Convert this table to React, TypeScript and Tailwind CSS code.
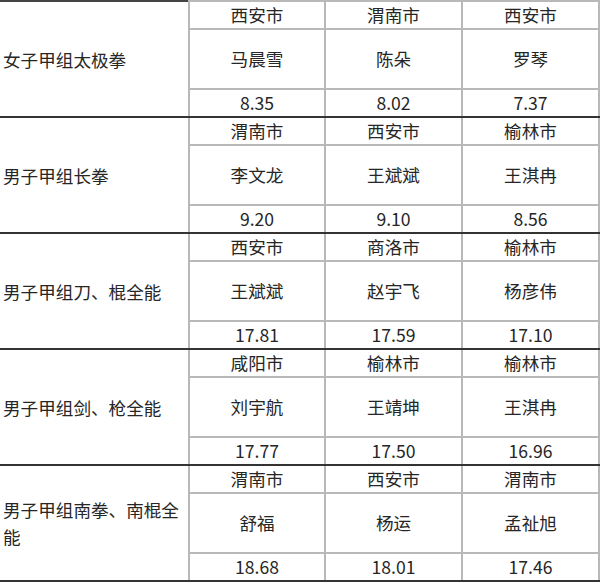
import { Fragment } from "react";

const GROUPS = [
  {
    event: "女子甲组太极拳",
    cities: ["西安市", "渭南市", "西安市"],
    names: ["马晨雪", "陈朵", "罗琴"],
    scores: ["8.35", "8.02", "7.37"],
  },
  {
    event: "男子甲组长拳",
    cities: ["渭南市", "西安市", "榆林市"],
    names: ["李文龙", "王斌斌", "王淇冉"],
    scores: ["9.20", "9.10", "8.56"],
  },
  {
    event: "男子甲组刀、棍全能",
    cities: ["西安市", "商洛市", "榆林市"],
    names: ["王斌斌", "赵宇飞", "杨彦伟"],
    scores: ["17.81", "17.59", "17.10"],
  },
  {
    event: "男子甲组剑、枪全能",
    cities: ["咸阳市", "榆林市", "榆林市"],
    names: ["刘宇航", "王靖坤", "王淇冉"],
    scores: ["17.77", "17.50", "16.96"],
  },
  {
    event: "男子甲组南拳、南棍全能",
    cities: ["渭南市", "西安市", "渭南市"],
    names: ["舒福", "杨运", "孟祉旭"],
    scores: ["18.68", "18.01", "17.46"],
  },
];

export default function App() {
  return (
    <div
      className="w-[601px] h-[583px] bg-white text-[#262626] overflow-hidden"
      style={{ fontFamily: '"Noto Sans CJK SC", "Noto Sans", sans-serif' }}
    >
      <table className="table-fixed border-collapse w-[599px] text-[17.6px] border-t-2 border-t-[#444]">
        <colgroup>
          <col className="w-[189px]" />
          <col className="w-[136px]" />
          <col className="w-[137px]" />
          <col className="w-[137px]" />
        </colgroup>
        <tbody>
          {GROUPS.map((g) => (
            <Fragment key={g.event}>
              <tr className="h-[28px]">
                <td
                  rowSpan={3}
                  className="border-b-2 border-b-[#333] border-r-2 border-r-[#b8b8b8] pl-[3px] pr-2 align-middle leading-[27px]"
                >
                  {g.event}
                </td>
                {g.cities.map((c, i) => (
                  <td key={i} className="border-2 border-[#b8b8b8] text-center leading-none p-0">
                    {c}
                  </td>
                ))}
              </tr>
              <tr className="h-[60px]">
                {g.names.map((n, i) => (
                  <td key={i} className="border-2 border-[#b8b8b8] text-center leading-none p-0">
                    {n}
                  </td>
                ))}
              </tr>
              <tr className="h-[28px]">
                {g.scores.map((s, i) => (
                  <td
                    key={i}
                    className="border-2 border-[#b8b8b8] border-b-[#333] text-center leading-none p-0"
                  >
                    {s}
                  </td>
                ))}
              </tr>
            </Fragment>
          ))}
        </tbody>
      </table>
    </div>
  );
}
